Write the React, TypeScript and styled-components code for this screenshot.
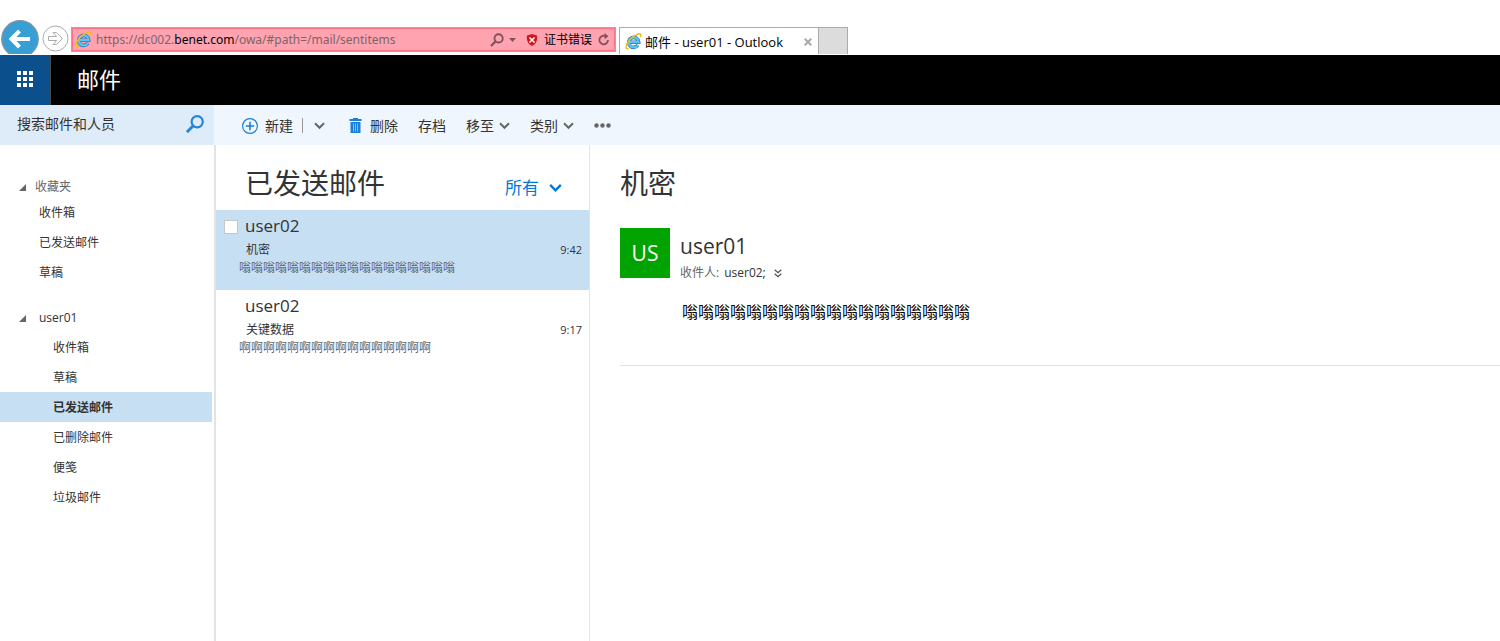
import React from "react";
import styled, { createGlobalStyle, css } from "styled-components";

const GlobalStyle = createGlobalStyle`
  * { box-sizing: border-box; }
  body {
    margin: 0;
    background: #fff;
    color: #333;
    font-family: "Open Sans", "Noto Sans CJK SC", sans-serif;
    font-size: 12px;
    line-height: 20px;
  }
  button, input, select { font: inherit; color: inherit; }
  button { padding: 0; border: 0; background: none; cursor: pointer; }
  h1, h2, p, ul { margin: 0; padding: 0; font-weight: 400; }
  ul { list-style: none; }
  a { color: inherit; text-decoration: none; }
  svg { display: block; flex: none; }
`;

const Page = styled.div`
  display: flex;
  flex-direction: column;
  min-height: 100vh;
`;

/* Browser chrome */

const BrowserBar = styled.div`
  display: flex;
  align-items: flex-start;
  height: 55px;
  padding: 20px 0 1px 1px;
  overflow: hidden;
`;

const BackButton = styled.button`
  height: 34px;
  overflow: hidden;
`;

const ForwardButton = styled.button`
  margin: 5px 2px 0 3px;
`;

const AddressBar = styled.div`
  display: flex;
  align-items: center;
  flex: 0 1 545px;
  min-width: 0;
  height: 25px;
  margin-top: 7px;
  padding: 0 5px 0 3px;
  border: 1px solid #ababab;
  box-shadow: inset 0 0 0 1px #ff7186;
  background: #ffa3b1;
`;

const Url = styled.div`
  flex: 1;
  min-width: 0;
  margin-left: 4px;
  overflow: hidden;
  white-space: nowrap;
  font-family: "Noto Sans", sans-serif;
  font-size: 12px;
  color: #7d6468;
`;

const Domain = styled.span`
  color: #000;
`;

const AddressTools = styled.div`
  display: flex;
  align-items: center;
  gap: 5px;
`;

const CertificateButton = styled.button`
  display: flex;
  align-items: center;
  gap: 6px;
  margin: 0 1px 0 5px;
  white-space: nowrap;
  color: #000;
`;

const Tab = styled.div`
  display: flex;
  align-items: center;
  gap: 3px;
  width: 200px;
  height: 27px;
  margin: 7px 0 0 3px;
  padding: 1px 6px 0 5px;
  border: 1px solid #ababab;
  border-bottom: 0;
  color: #000;
`;

const TabTitle = styled.span`
  flex: 1;
  white-space: nowrap;
  font-size: 13px;
`;

const NewTab = styled.button`
  width: 29px;
  height: 27px;
  margin-top: 7px;
  border: 1px solid #ababab;
  border-width: 1px 1px 0 0;
  background: #dcdcdc;
`;

/* Suite header */

const SuiteHeader = styled.header`
  display: flex;
  align-items: center;
  height: 50px;
  background: #000;
  color: #fff;
`;

const Launcher = styled.button`
  display: flex;
  align-items: center;
  justify-content: center;
  width: 51px;
  height: 50px;
  padding-bottom: 2px;
  border-right: 1px solid #4a4a4a;
  background: #0b508c;
`;

const SuiteTitle = styled.h1`
  margin-left: 26px;
  padding-bottom: 2px;
  font-size: 22px;
  line-height: 32px;
`;

/* Search and commands */

const CommandRow = styled.div`
  display: flex;
  height: 40px;
  background: #eff6fd;
`;

const SearchForm = styled.form`
  display: flex;
  align-items: center;
  width: 214px;
  padding: 0 10px 2px 17px;
  background: #deebf8;
  font-size: 14px;
`;

const SearchInput = styled.input`
  flex: 1;
  min-width: 0;
  padding: 0;
  border: 0;
  outline: 0;
  background: none;
  &::placeholder { color: #333; opacity: 1; }
`;

const Toolbar = styled.div`
  display: flex;
  align-items: center;
  gap: 20px;
  padding: 1px 0 0 28px;
  font-size: 14px;
`;

const Command = styled.button<{ $gap?: number }>`
  display: flex;
  align-items: center;
  gap: ${(p) => p.$gap ?? 7}px;
  white-space: nowrap;
`;

const SplitCommand = styled.div`
  display: flex;
  align-items: center;
  margin-right: 4px;
`;

const Divider = styled.span`
  width: 1px;
  height: 15px;
  margin: 0 11px 0 9px;
  background: #999;
`;

/* Columns */

const Columns = styled.div`
  display: flex;
  flex: 1;
`;

const Sidebar = styled.nav`
  width: 216px;
  padding: 30px 2px 0 0;
  border-right: 2px solid #e3e3e3;
`;

const GroupHeader = styled.button<{ $account?: boolean }>`
  display: flex;
  align-items: center;
  gap: ${(p) => (p.$account ? 13 : 9)}px;
  width: 100%;
  height: ${(p) => (p.$account ? 30 : 22)}px;
  margin-top: ${(p) => (p.$account ? 15 : 0)}px;
  padding: 2px 0 0 19px;
  color: ${(p) => (p.$account ? "#333" : "#666")};
`;

const Folder = styled.a<{ $indent: number; $selected?: boolean }>`
  display: block;
  padding: 2px 0 0 ${(p) => p.$indent}px;
  line-height: 28px;
  ${(p) =>
    p.$selected &&
    css`
      background: #c7dff3;
      font-weight: 700;
    `}
`;

const MessageList = styled.section`
  width: 374px;
  border-right: 1px solid #e3e3e3;
`;

const ListHeader = styled.div`
  display: flex;
  align-items: center;
  justify-content: space-between;
  height: 65px;
  padding: 0 27px 0 29px;
`;

const Title = styled.h2`
  font-size: 28px;
  line-height: 40px;
  padding-bottom: 12px;
  margin-top: 22px;
`;

const FilterButton = styled.button`
  display: flex;
  align-items: center;
  gap: 10px;
  margin-top: 20px;
  font-size: 17px;
  color: #0078d7;
`;

const Message = styled.li<{ $selected?: boolean }>`
  display: flex;
  height: 80px;
  padding: 4px 7px 0 8px;
  background: ${(p) => (p.$selected ? "#c7dff3" : "transparent")};
`;

const CheckCell = styled.div`
  width: 15px;
  padding-top: 6px;
`;

const Checkbox = styled.input`
  display: block;
  appearance: none;
  width: 14px;
  height: 14px;
  margin: 0;
  border: 1px solid #c6c6c6;
  background: #fff;
`;

const MessageText = styled.div`
  flex: 1;
  min-width: 0;
`;

const Sender = styled.p`
  padding-left: 6px;
  font-size: 17px;
  line-height: 24px;
`;

const SubjectLine = styled.div`
  display: flex;
  justify-content: space-between;
  padding-left: 7px;
  line-height: 24px;
`;

const Time = styled.time`
  font-size: 11px;
`;

const Preview = styled.p`
  color: #666;
  line-height: 12px;
`;

const Reading = styled.main`
  flex: 1;
  min-width: 0;
  padding-left: 30px;
`;

const ReadingTitle = styled(Title)`
  margin: 18px 0 0;
  padding: 0;
`;

const Person = styled.div`
  display: flex;
  gap: 10px;
  margin-top: 25px;
`;

const Avatar = styled.div`
  width: 50px;
  height: 50px;
  background: #00a300;
  color: #fff;
  font-size: 21px;
  line-height: 50px;
  text-align: center;
`;

const PersonName = styled.p`
  padding-top: 3px;
  font-size: 21px;
  line-height: 30px;
`;

const Recipients = styled.div`
  display: flex;
  align-items: center;
  gap: 5px;
  padding-top: 2px;
`;

const Muted = styled.span`
  color: #666;
`;

const ExpandButton = styled.button`
  margin-left: 3px;
`;

const MessageBody = styled.p`
  padding: 18px 0 42px 62px;
  border-bottom: 1px solid #e3e3e3;
  font-size: 16px;
  line-height: 22px;
  color: #000;
`;

const IeLogo = () => (
  <svg width="17" height="17" viewBox="0 0 17 17" fill="none" aria-hidden="true">
    <path
      d="M4.500 9.200H13.700A5 5 0 1 0 12.900 12.100"
      stroke="#2379bb"
      strokeWidth="3.600"
    />
    <path
      d="M4.500 9.200H13.700A5 5 0 1 0 12.900 12.100"
      stroke="#5fc3f2"
      strokeWidth="2.200"
    />
    <path
      d="M3.600 15.500C.2 16.900-.1 12 4.700 6.800 9.300 2 14.500-.2 15.700 1.400c.5.700.2 1.700-.2 2.600"
      stroke="#f4b81c"
      strokeWidth="1.500"
    />
  </svg>
);

const Chevron = ({ size = 11, color = "#666" }: { size?: number; color?: string }) => (
  <svg width={size} height={size} viewBox="0 0 11 11" aria-hidden="true">
    <path d="M1 3.300 5.500 7.800 10 3.300" fill="none" stroke={color} strokeWidth="2" />
  </svg>
);

const Triangle = () => (
  <svg width="7" height="7" viewBox="0 0 7 7" aria-hidden="true">
    <path d="M7 0v7H0Z" fill="#666" />
  </svg>
);

const favorites = ["收件箱", "已发送邮件", "草稿"];
const folders = ["收件箱", "草稿", "已发送邮件", "已删除邮件", "便笺", "垃圾邮件"];
const messages = [
  { from: "user02", subject: "机密", time: "9:42", preview: "嗡".repeat(18), selected: true },
  { from: "user02", subject: "关键数据", time: "9:17", preview: "啊".repeat(16), selected: false },
];

export default function App() {
  return (
    <Page>
      <GlobalStyle />
      <BrowserBar>
        <BackButton aria-label="后退">
          <svg width="38" height="38" viewBox="0 0 38 38">
            <circle cx="19" cy="19" r="18.300" fill="#379fd3" stroke="#8b9398" strokeWidth="1.200" />
            <path d="M29 19H11M18.500 11 10.500 19l8 8" fill="none" stroke="#fff" strokeWidth="4" />
          </svg>
        </BackButton>
        <ForwardButton aria-label="前进">
          <svg width="27" height="27" viewBox="0 0 27 27">
            <circle cx="13.500" cy="13.500" r="12.500" fill="#fff" stroke="#ababab" />
            <path
              d="M6.500 11.500h8.200l-3.700-4h3.400l6.100 6-6.100 6H11l3.700-4H6.500Z"
              fill="#fff"
              stroke="#ababab"
            />
          </svg>
        </ForwardButton>
        <AddressBar>
          <IeLogo />
          <Url role="textbox" aria-label="地址">
            https://dc002.<Domain>benet.com</Domain>/owa/#path=/mail/sentitems
          </Url>
          <AddressTools>
            <button aria-label="搜索">
              <svg width="14" height="14" viewBox="0 0 14 14">
                <circle cx="8.600" cy="5.400" r="4.100" fill="none" stroke="#80525a" strokeWidth="1.900" />
                <path d="M5.700 8.300 1 13" stroke="#80525a" strokeWidth="2.200" />
              </svg>
            </button>
            <button aria-label="历史记录">
              <svg width="7" height="4" viewBox="0 0 7 4">
                <path d="M0 0h7L3.500 4Z" fill="#80525a" />
              </svg>
            </button>
            <CertificateButton>
              <svg width="12" height="12" viewBox="0 0 12 12">
                <path
                  d="M6 0 11 1.500Q12.200 9 6 12 -.2 9 1 1.500Z"
                  fill="#d8141c"
                />
                <path d="m3.500 3.500 5 5m0-5-5 5" stroke="#fff" strokeWidth="1.500" />
              </svg>
              证书错误
            </CertificateButton>
            <button aria-label="刷新">
              <svg width="12" height="13" viewBox="0 0 12 13">
                <path d="M7.500 3.100A4.300 4.300 0 1 0 10 7" fill="none" stroke="#80525a" strokeWidth="1.800" />
                <path d="M6.500 0 10.500 3.200 6.500 6.200Z" fill="#80525a" />
              </svg>
            </button>
          </AddressTools>
        </AddressBar>
        <Tab>
          <IeLogo />
          <TabTitle>邮件 - user01 - Outlook</TabTitle>
          <button aria-label="关闭标签页">
            <svg width="8" height="8" viewBox="0 0 8 8">
              <path d="m.7.7 6.600 6.600m0-6.600L.7 7.300" stroke="#aaa" strokeWidth="2" />
            </svg>
          </button>
        </Tab>
        <NewTab aria-label="新建标签页" />
      </BrowserBar>

      <SuiteHeader>
        <Launcher aria-label="应用启动器">
          <svg width="16" height="16" viewBox="0 0 16 16" fill="#fff">
            {[0, 6, 12].map((y) =>
              [0, 6, 12].map((x) => <rect key={`${x}-${y}`} x={x} y={y} width="4" height="4" />)
            )}
          </svg>
        </Launcher>
        <SuiteTitle>邮件</SuiteTitle>
      </SuiteHeader>

      <CommandRow>
        <SearchForm role="search">
          <SearchInput aria-label="搜索邮件和人员" placeholder="搜索邮件和人员" />
          <button type="button" aria-label="搜索">
            <svg width="18" height="18" viewBox="0 0 18 18">
              <circle cx="11.200" cy="6.800" r="5.600" fill="none" stroke="#2684dc" strokeWidth="2.200" />
              <path d="M7.200 10.800.9 17.100" stroke="#2684dc" strokeWidth="3" />
            </svg>
          </button>
        </SearchForm>
        <Toolbar>
          <SplitCommand>
            <Command>
              <svg width="16" height="16" viewBox="0 0 16 16">
                <circle cx="8" cy="8" r="7.400" fill="none" stroke="#1a80da" strokeWidth="1.200" />
                <path d="M8 3.800v8.400M3.800 8h8.400" stroke="#1a80da" strokeWidth="1.600" />
              </svg>
              新建
            </Command>
            <Divider />
            <button aria-label="更多新建选项">
              <Chevron />
            </button>
          </SplitCommand>
          <Command $gap={8}>
            <svg width="13" height="15" viewBox="0 0 13 15" fill="#1a80da">
              <path d="M4 0h5v1h3.500v2H.5V1H4Z" />
              <path d="M1.500 4h10v11h-10Z" />
              <path d="M4.500 5.500v8M6.500 5.500v8M8.500 5.500v8" stroke="#8abdec" />
            </svg>
            删除
          </Command>
          <Command>存档</Command>
          <Command $gap={5}>
            移至
            <Chevron />
          </Command>
          <Command $gap={5}>
            类别
            <Chevron />
          </Command>
          <Command aria-label="更多命令">
            <svg width="17" height="5" viewBox="0 0 17 5" fill="#666">
              <circle cx="2.500" cy="2.500" r="2.200" />
              <circle cx="8.500" cy="2.500" r="2.200" />
              <circle cx="14.500" cy="2.500" r="2.200" />
            </svg>
          </Command>
        </Toolbar>
      </CommandRow>

      <Columns>
        <Sidebar>
          <GroupHeader>
            <Triangle />
            收藏夹
          </GroupHeader>
          {favorites.map((name) => (
            <Folder key={name} href="#" $indent={39}>
              {name}
            </Folder>
          ))}
          <GroupHeader $account>
            <Triangle />
            user01
          </GroupHeader>
          {folders.map((name) => (
            <Folder key={name} href="#" $indent={53} $selected={name === "已发送邮件"}>
              {name}
            </Folder>
          ))}
        </Sidebar>

        <MessageList>
          <ListHeader>
            <Title>已发送邮件</Title>
            <FilterButton>
              所有
              <Chevron size={13} color="#0078d7" />
            </FilterButton>
          </ListHeader>
          <ul>
            {messages.map((m) => (
              <Message key={m.time} $selected={m.selected}>
                <CheckCell>
                  {m.selected && <Checkbox type="checkbox" aria-label={m.subject} />}
                </CheckCell>
                <MessageText>
                  <Sender>{m.from}</Sender>
                  <SubjectLine>
                    <span>{m.subject}</span>
                    <Time>{m.time}</Time>
                  </SubjectLine>
                  <Preview>{m.preview}</Preview>
                </MessageText>
              </Message>
            ))}
          </ul>
        </MessageList>

        <Reading>
          <ReadingTitle>机密</ReadingTitle>
          <Person>
            <Avatar>US</Avatar>
            <div>
              <PersonName>user01</PersonName>
              <Recipients>
                <Muted>收件人:</Muted>
                <span>user02;</span>
                <ExpandButton aria-label="展开详细信息">
                  <svg width="8" height="9" viewBox="0 0 8 9">
                    <path d="m.7.700 3.300 3 3.300-3M.7 4.700l3.300 3 3.300-3" fill="none" stroke="#555" strokeWidth="1.300" />
                  </svg>
                </ExpandButton>
              </Recipients>
            </div>
          </Person>
          <MessageBody>{"嗡".repeat(18)}</MessageBody>
        </Reading>
      </Columns>
    </Page>
  );
}
